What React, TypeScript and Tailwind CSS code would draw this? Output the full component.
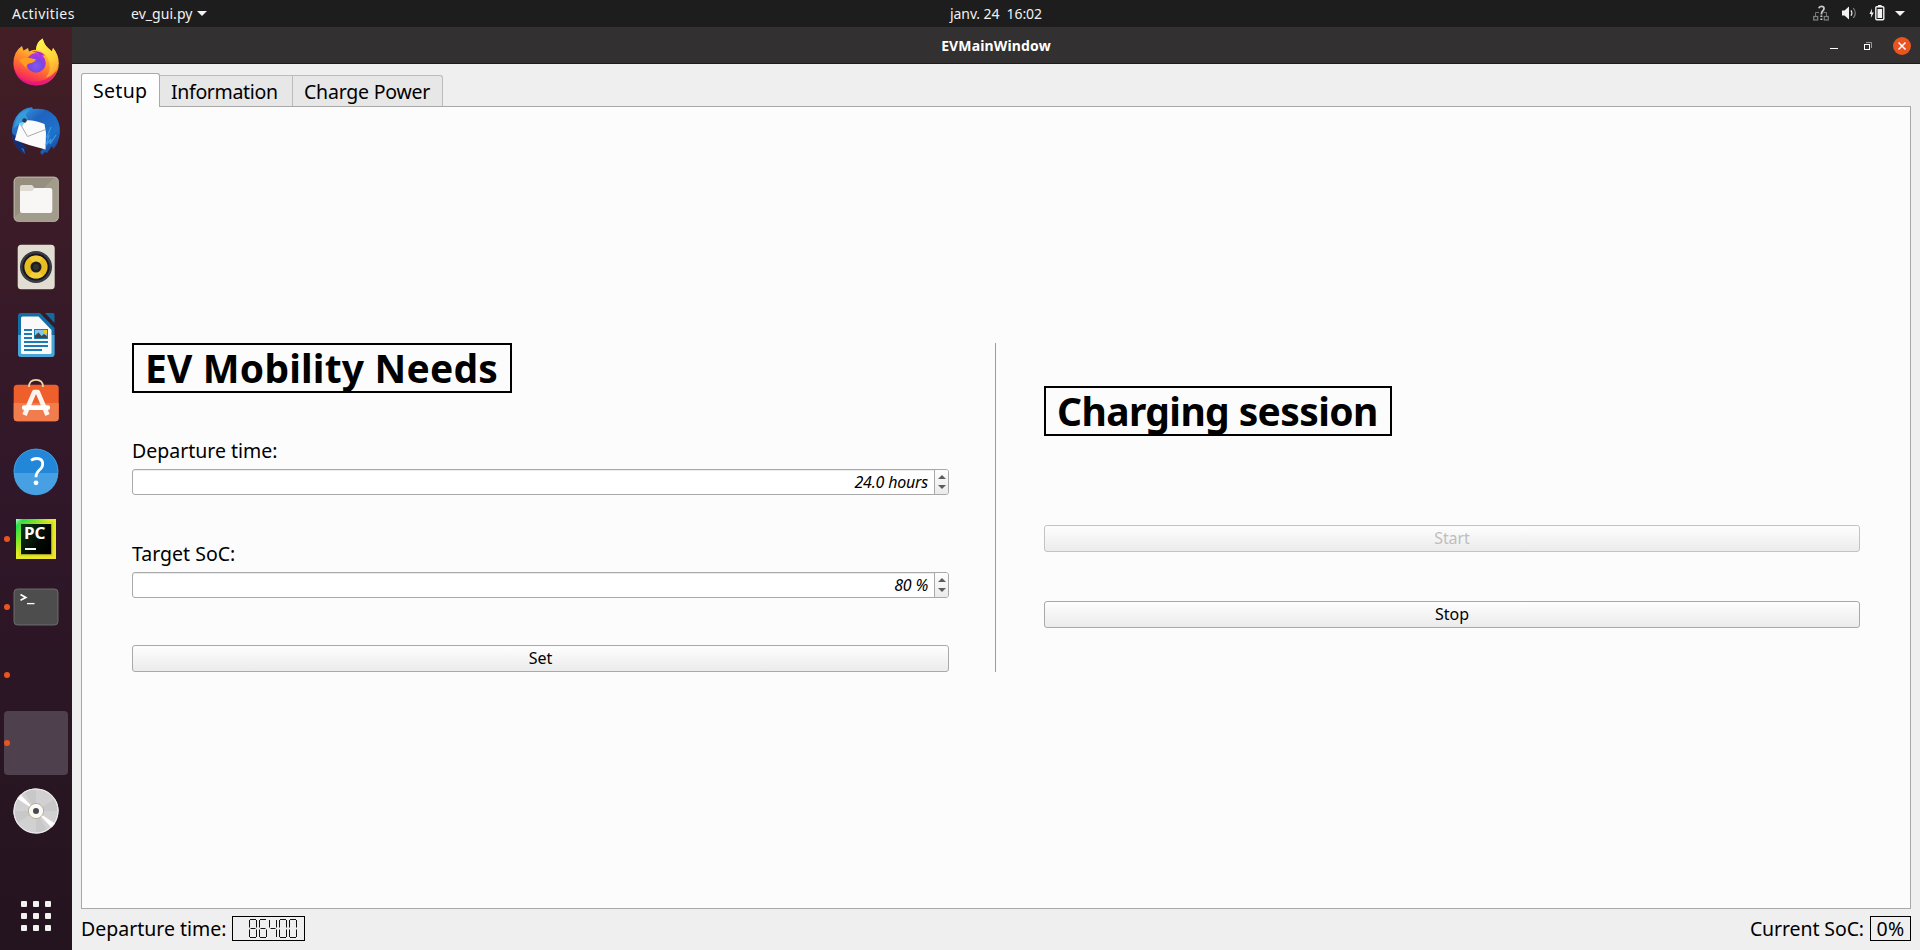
import React from "react";

function Firefox() {
  return (
    <svg viewBox="0 0 64 64" className="size-16">
      <defs>
        <linearGradient id="ffBody" x1="0.75" y1="0" x2="0.35" y2="1">
          <stop offset="0" stopColor="#fff04a" />
          <stop offset="0.35" stopColor="#ffb730" />
          <stop offset="0.6" stopColor="#ff7a2c" />
          <stop offset="0.85" stopColor="#fb3750" />
          <stop offset="1" stopColor="#e01587" />
        </linearGradient>
        <linearGradient id="ffTail" x1="0.3" y1="0" x2="0.7" y2="1">
          <stop offset="0" stopColor="#fff44f" />
          <stop offset="0.6" stopColor="#ffd038" />
          <stop offset="1" stopColor="#ff9a2e" />
        </linearGradient>
        <radialGradient id="ffGlobe" cx="0.5" cy="0.65" r="0.6">
          <stop offset="0" stopColor="#7a5cf5" />
          <stop offset="0.6" stopColor="#7e45dd" />
          <stop offset="1" stopColor="#b833e1" />
        </radialGradient>
      </defs>
      <g transform="translate(0 -0.6)">
        <path d="M18 15.5L19.5 20L24 17.5L25 21Q29 19 32 19.5Q32 12 38.7 8Q40 14 44 17.5L48 21L49 17.5Q54.8 24 54.8 33A22.6 22 0 0 1 9.4 33Q9.4 21 18 15.5Z" fill="url(#ffBody)" />
        <path d="M32 19.5Q32 12 38.7 8Q40 14 44 17.5L48 21L49 17.5Q54.5 24 54 33Q52 44 42 47Q49 38 44 28Q40 20 32 19.5Z" fill="url(#ffTail)" />
        <path d="M10 38Q14 50 28 51.5Q43 52 53 40Q48 54.8 32 54.8Q14 54 10 38Z" fill="#e31480" opacity="0.75" />
        <circle cx="32" cy="32.5" r="9.8" fill="url(#ffGlobe)" />
        <path d="M41 25Q36 20 28 21Q34 22 37 25Z" fill="#a32bd8" />
        <path d="M15 29.5Q20 26.5 26 27.5L32 29Q31 32 25 33Q22 34 22.5 38Q18 33 15 29.5Z" fill="#ff9c22" />
      </g>
    </svg>
  );
}

function Thunderbird() {
  return (
    <svg viewBox="0 0 64 64" className="size-16">
      <defs>
        <linearGradient id="tbBody" x1="0.1" y1="0" x2="0.9" y2="1">
          <stop offset="0" stopColor="#3ba2e4" />
          <stop offset="0.35" stopColor="#1f63bf" />
          <stop offset="0.7" stopColor="#1e73cc" />
          <stop offset="1" stopColor="#173f93" />
        </linearGradient>
      </defs>
      <path d="M12 18Q18 9 28 8.3L29 10Q44 8 52 18Q58 28 55 39Q53 47 49 50L48 47L43 54L41 53L38 56L36 53L40 49L41 34L20 24L11 38L12 44L20 50L21 55Q12 50 9 41Q6 28 12 18Z" fill="url(#tbBody)" />
      <path d="M8 34Q8 48 21 55L17 49L24 50Z" fill="#162d73" />
      <path d="M15.5 24L20 21.5Q29 20 40.5 25L42 34L41.5 50.5Q26 47 10.8 41Z" fill="#fbfbfb" />
      <path d="M16 24.5L23.5 37.5L41.5 30.5" fill="none" stroke="#aaa" strokeWidth="1" />
      <path d="M12 22Q14 13 27 10Q22 13 22 17Q26 20 21 22L18 27L15 25L10 29Z" fill="#379cdd" />
      <circle cx="20.5" cy="21.5" r="2.2" fill="#263a52" />
      <path d="M15 24L20 23L18 28Z" fill="#89d2ed" />
      <path d="M47 28L43 38L45 37L42 46L47 40L46 45L52 36" fill="none" stroke="#3b96df" strokeWidth="1.3" />
    </svg>
  );
}

function Files() {
  return (
    <svg viewBox="0 0 64 64" className="size-16">
      <rect x="9.7" y="9.7" width="45" height="45" rx="4.5" fill="#968f7f" />
      <path d="M11 50L50 11H51Q53.5 11 53.5 14V50Q53.5 53.3 50 53.3H14Q11 53.3 11 50Z" fill="#a29c8c" />
      <rect x="10.2" y="10.2" width="44" height="44" rx="4.2" fill="none" stroke="#bab5a7" strokeWidth="1" />
      <path d="M16 20Q16 18 18 18H28L31 21.5H46V28H16Z" fill="#dedbd2" />
      <path d="M16 24H28L31 21H46Q48.3 21 48.3 23V43.5Q48.3 46 46 46H18Q16 46 16 44Z" fill="#f8f7f5" />
    </svg>
  );
}

function Rhythmbox() {
  return (
    <svg viewBox="0 0 64 64" className="size-16">
      <rect x="13.7" y="9.7" width="37" height="44.6" rx="3.5" fill="#e2ddd2" />
      <circle cx="32" cy="32" r="16" fill="#3a3b44" />
      <circle cx="32" cy="32" r="13.5" fill="#16161c" />
      <circle cx="32" cy="32" r="11.6" fill="#e9bd20" />
      <path d="M32 32L25 22.8A11.6 11.6 0 0 1 39 22.8ZM32 32L25 41.2A11.6 11.6 0 0 0 39 41.2Z" fill="#f6d548" opacity="0.7" />
      <circle cx="32" cy="32" r="5.5" fill="#1f1f1f" />
      <circle cx="32" cy="32" r="3" fill="#333" />
    </svg>
  );
}

function Writer() {
  return (
    <svg viewBox="0 0 64 64" className="size-16">
      <path d="M14 13Q14 10 17 10H36L50.5 25V51Q50.5 54 47.5 54H17Q14 54 14 51Z" fill="#126ea5" />
      <path d="M14 32H50.5V51Q50.5 54 47.5 54H17Q14 54 14 51Z" fill="#4aa5d6" />
      <path d="M41 10H49Q50.5 10 50.5 12V20Z" fill="#126a9e" />
      <path d="M17 15Q17 13.5 18.5 13.5H34.5L47.5 27V49.5Q47.5 51 46 51H18.5Q17 51 17 49.5Z" fill="#fafafa" />
      <path d="M20 27h8M20 31h8M20 35h8M20 39h24M20 43h24M20 47h18" stroke="#1b7cb5" strokeWidth="2" />
      <rect x="30" y="26" width="14" height="10" fill="#1b7cb5" />
      <rect x="31" y="27" width="12" height="8" fill="#83c6ed" />
      <rect x="40" y="27" width="3" height="3" fill="#f2ca1c" />
      <path d="M31 35V32.5L34.5 29.5L37.5 33L40 31L43 33V35Z" fill="#444" />
    </svg>
  );
}

function Software() {
  return (
    <svg viewBox="0 0 64 64" className="size-16">
      <rect x="9.7" y="13.7" width="45" height="36.5" rx="3.5" fill="#ef5f2b" />
      <path d="M9.7 32H54.7V46.7Q54.7 50.2 51.2 50.2H13.2Q9.7 50.2 9.7 46.7Z" fill="#f17c4d" />
      <path d="M25 16Q25 8.8 32 8.8Q39 8.8 39 16" fill="none" stroke="#f1d5a5" strokeWidth="1.7" />
      <path d="M20.5 44L30.3 21H33.7L43.5 44" fill="none" stroke="#fdf4ef" strokeWidth="4.6" strokeLinejoin="round" />
      <rect x="18" y="34.3" width="28" height="4.6" rx="2" fill="#fff" />
    </svg>
  );
}

function Help() {
  return (
    <svg viewBox="0 0 64 64" className="size-16">
      <circle cx="32" cy="32" r="22.3" fill="#2287d9" />
      <path d="M9.7 34A22.3 22.3 0 0 0 54.3 34Z" fill="#46a0e3" />
      <circle cx="32" cy="32" r="21.9" fill="none" stroke="#4d9fdb" strokeWidth="0.8" />
      <path d="M27 21.3Q29.5 19.5 32.7 19.5Q38.7 19.5 38.7 25Q38.7 28.4 35.4 31Q32 33.7 32 38.3" fill="none" stroke="#fff" strokeWidth="2.8" />
      <circle cx="32" cy="43.8" r="2.4" fill="#fff" />
    </svg>
  );
}

function PyCharm() {
  return (
    <svg viewBox="0 0 64 64" className="size-16">
      <defs>
        <linearGradient id="pcEdge" x1="0" y1="0" x2="1" y2="1">
          <stop offset="0" stopColor="#bff7d0" />
          <stop offset="0.1" stopColor="#21df4e" />
          <stop offset="0.27" stopColor="#6fea30" />
          <stop offset="0.45" stopColor="#e3ec28" />
          <stop offset="1" stopColor="#f3e32a" />
        </linearGradient>
        <linearGradient id="pcInner" x1="0" y1="0.2" x2="1" y2="0.8">
          <stop offset="0" stopColor="#093414" />
          <stop offset="0.6" stopColor="#030a04" />
          <stop offset="1" stopColor="#000" />
        </linearGradient>
      </defs>
      <rect x="12" y="12" width="40" height="40" fill="url(#pcEdge)" />
      <rect x="15.5" y="15.5" width="33" height="33" fill="none" stroke="#b9c216" strokeWidth="1.5" opacity="0.4" />
      <rect x="17" y="17" width="30.3" height="30.3" fill="url(#pcInner)" />
      <text x="20" y="32" fontSize="15.5" fontWeight="700" fill="#fff" fontFamily="Noto Sans, sans-serif" textLength="21.5" lengthAdjust="spacingAndGlyphs">PC</text>
      <rect x="21" y="41" width="11" height="2" fill="#fff" />
    </svg>
  );
}

function Terminal() {
  return (
    <svg viewBox="0 0 64 64" className="size-16">
      <rect x="10" y="14" width="44" height="36" rx="3.5" fill="#4d4d4d" stroke="#727272" strokeWidth="0.9" />
      <path d="M16.5 19.5L21.8 22.4L16.5 25.3" fill="none" stroke="#fff" strokeWidth="1.7" />
      <path d="M23 28.6h7.5" stroke="#fff" strokeWidth="1.3" />
    </svg>
  );
}

function Disc() {
  return (
    <svg viewBox="0 0 64 64" className="size-16">
      <circle cx="32" cy="32" r="22.6" fill="#d1d1d1" />
      <path d="M32 32L20 12.8A22.6 22.6 0 0 1 32 9.4ZM32 32L54.6 32A22.6 22.6 0 0 0 51 19.8ZM32 32L32 54.6A22.6 22.6 0 0 0 43 51.8ZM32 32L9.4 32A22.6 22.6 0 0 0 13 44.2Z" fill="#c8c8c8" />
      <path d="M32 32L13 19.6A22.6 22.6 0 0 1 16.6 15.5ZM32 32L51 44.4A22.6 22.6 0 0 1 47.4 48.5Z" fill="#fff" />
      <circle cx="32" cy="32" r="22" fill="none" stroke="#efefef" strokeWidth="1" />
      <circle cx="32" cy="32" r="7.6" fill="#faf9f6" stroke="#b5a890" strokeWidth="0.9" />
      <circle cx="32" cy="32" r="3" fill="#4a4a4a" />
    </svg>
  );
}

const dock = [
  { icon: <Firefox />, running: false, active: false },
  { icon: <Thunderbird />, running: false, active: false },
  { icon: <Files />, running: false, active: false },
  { icon: <Rhythmbox />, running: false, active: false },
  { icon: <Writer />, running: false, active: false },
  { icon: <Software />, running: false, active: false },
  { icon: <Help />, running: false, active: false },
  { icon: <PyCharm />, running: true, active: false },
  { icon: <Terminal />, running: true, active: false },
  { icon: null, running: true, active: false },
  { icon: null, running: true, active: true },
  { icon: <Disc />, running: false, active: false },
];

function Dock() {
  return (
    <nav className="flex w-[72px] shrink-0 flex-col items-center bg-linear-to-b from-[#431e25] via-[#301729] to-[#24141f] pt-1">
      <div className="flex flex-col gap-1">
        {dock.map((item, i) => (
          <div key={i} className={item.active ? "relative size-16 rounded bg-[#4e404d]" : "relative size-16"}>
            {item.icon}
            {item.running && <span className="absolute top-[29px] left-0 size-1.5 rounded-full bg-[#e95420]" />}
          </div>
        ))}
      </div>
      <div className="mt-[58px] grid grid-cols-3 gap-1.5">
        {Array.from({ length: 9 }, (_, i) => (
          <span key={i} className="size-1.5 rounded-[1px] bg-[#f2f2f0]" />
        ))}
      </div>
    </nav>
  );
}

function Caret() {
  return (
    <svg viewBox="0 0 10 5" className="h-[5px] w-2.5">
      <path d="M0 0H10L5 5Z" fill="#f2f2f2" />
    </svg>
  );
}

function TopBar() {
  return (
    <header className="grid h-[27px] shrink-0 grid-cols-[1fr_auto_1fr] items-center bg-[#1d1d1d] text-sm/[27px] text-[#f2f2f2]">
      <div className="flex items-center pl-3">
        <span className="w-[119px] tracking-[0.45px]">Activities</span>
        <span className="mr-1 tracking-[0.05px]">ev_gui.py</span>
        <Caret />
      </div>
      <span className="pl-[72px] tracking-[-0.08px] whitespace-pre">janv. 24  16:02</span>
      <div className="flex items-center justify-end pr-[15px] pb-px">
        <svg viewBox="0 0 16 16" className="mr-[13px] size-4">
          <path d="M2.5 11V7.5H6M13.5 11V7.5H10.5" fill="none" stroke="#777" strokeWidth="1" />
          <rect x="0.7" y="11.5" width="4" height="3.5" fill="none" stroke="#808080" strokeWidth="1.2" />
          <rect x="11.3" y="11.5" width="4" height="3.5" fill="none" stroke="#808080" strokeWidth="1.2" />
          <path d="M5.8 3.2Q6.3 1.3 8.5 1.3Q11 1.3 11 3.6Q11 5 9.6 6Q8.5 7 8.4 9.5" fill="none" stroke="#c8c8c8" strokeWidth="1.8" />
          <path d="M7.4 10.5h2v1.5h-2zM7.4 13.4h2v1.5h-2z" fill="#c8c8c8" />
        </svg>
        <svg viewBox="0 0 15 14" className="mr-3 h-3.5 w-[15px]">
          <path d="M0 4.5H2.5L7 0.5V13.5L2.5 9.5H0Z" fill="#f2f2f2" />
          <path d="M9 4.2Q10.8 7 9 9.8" fill="none" stroke="#e0e0e0" strokeWidth="1.2" />
          <path d="M11.3 2Q15.3 7 11.3 12" fill="none" stroke="#808080" strokeWidth="1.2" />
        </svg>
        <svg viewBox="0 0 16 16" className="mr-2.5 size-4">
          <path d="M3 3.5L0.5 9H2.3L1.8 13L4.8 7.5H2.8Z" fill="#f2f2f2" />
          <rect x="6.8" y="1.8" width="8" height="13" rx="1" fill="none" stroke="#f2f2f2" strokeWidth="1.4" />
          <rect x="9" y="0" width="3.6" height="1.6" fill="#f2f2f2" />
          <rect x="8.5" y="4" width="4.6" height="9" fill="#f2f2f2" />
        </svg>
        <Caret />
      </div>
    </header>
  );
}

function TitleBar() {
  return (
    <div className="grid h-[37px] shrink-0 grid-cols-[1fr_auto_1fr] items-center border-b border-[#1c1b1b] bg-[#323030] text-sm/[36px] text-white">
      <span />
      <span className="pt-px font-bold tracking-[0.15px]">EVMainWindow</span>
      <div className="flex items-center justify-end pr-[9px]">
        <svg viewBox="0 0 8 8" className="mr-[26px] size-2">
          <rect y="6" width="8" height="1" fill="#fff" />
        </svg>
        <svg viewBox="0 0 8 8" className="mr-[21px] size-2">
          <path d="M2 0.5H7.5V6" fill="none" stroke="#999" />
          <rect x="0.5" y="2.5" width="5" height="5" fill="none" stroke="#fff" />
        </svg>
        <svg viewBox="0 0 18 18" className="size-[18px]">
          <circle cx="9" cy="9" r="9" fill="#e95420" />
          <path d="M5.5 5.5L12.5 12.5M12.5 5.5L5.5 12.5" stroke="#fff" strokeWidth="1.5" />
        </svg>
      </div>
    </div>
  );
}

function SpinBox({ value }: { value: string }) {
  return (
    <div className="flex h-[26px] overflow-hidden rounded-[3px] border border-[#a9a9a9] bg-white shadow-[inset_0_1px_0_#ececec]">
      <span className="flex-1 pr-1.5 text-right text-base/6 tracking-[-0.2px] italic">{value}</span>
      <div className="flex w-3.5 flex-col items-center justify-center gap-[6px] border-l border-[#a9a9a9] bg-linear-to-b from-[#fdfdfd] to-[#ebebeb]">
        <svg viewBox="0 0 8 4" className="h-1 w-2">
          <path d="M0 4L4 0L8 4Z" fill="#5c5c5c" />
        </svg>
        <svg viewBox="0 0 8 4" className="h-1 w-2">
          <path d="M0 0H8L4 4Z" fill="#5c5c5c" />
        </svg>
      </div>
    </div>
  );
}

function Button({ label, disabled }: { label: string; disabled?: boolean }) {
  return (
    <button
      disabled={disabled}
      className="flex h-[27px] w-full justify-center rounded-[3px] border border-[#a9a9a9] bg-linear-to-b from-[#fefefe] to-[#ebebeb] text-base/[25px] tracking-[-0.05px] disabled:border-[#c2c2c2] disabled:text-[#bebebe]"
    >
      {label}
    </button>
  );
}

const segmentPaths = {
  a: "M1 0.5H7",
  b: "M7.5 1V8.5",
  c: "M7.5 10.5V18",
  d: "M1 18.5H7",
  e: "M0.5 10.5V18",
  f: "M0.5 1V8.5",
  g: "M1.5 9.5H6.5",
};

const digitSegments: Record<string, (keyof typeof segmentPaths)[]> = {
  "0": ["a", "b", "c", "d", "e", "f"],
  "4": ["b", "c", "f", "g"],
  "6": ["a", "c", "d", "e", "f", "g"],
  "8": ["a", "b", "c", "d", "e", "f", "g"],
};

function Lcd({ value }: { value: string }) {
  return (
    <div className="flex h-[25px] w-[73px] items-center justify-end gap-0.5 border border-black pr-[7px]" aria-label={value}>
      {value.split("").map((d, i) => (
        <svg key={i} viewBox="0 0 8 19" className="h-[19px] w-2">
          {digitSegments[d].map((s) => (
            <path key={s} d={segmentPaths[s]} stroke="#111" strokeWidth="1" fill="none" />
          ))}
        </svg>
      ))}
    </div>
  );
}

export default function App() {
  return (
    <div className="flex h-[950px] w-[1920px] flex-col overflow-hidden bg-[#efefef] font-['Noto_Sans',sans-serif] text-black">
      <TopBar />
      <div className="flex min-h-0 flex-1">
        <Dock />
        <div className="flex min-w-0 flex-1 flex-col">
          <TitleBar />
          <main className="flex flex-1 flex-col px-[9px] pt-[9px] text-[19.5px]">
            <div className="relative z-10 -mb-px flex items-end">
              <div className="h-[34px] w-[79px] rounded-t-[3px] border border-b-0 border-[#a9a9a9] bg-linear-to-b from-white to-[#fcfcfc] pl-[11px] leading-[34px] tracking-[0.3px]">Setup</div>
              <div className="mb-px h-[31px] w-[133px] border-t border-r border-[#bcbcbc] bg-[#e7e7e7] pl-[11px] leading-[32px] tracking-[-0.33px]">Information</div>
              <div className="mb-px h-[31px] w-[150px] rounded-tr-[3px] border-t border-r border-[#bcbcbc] bg-[#e7e7e7] pl-[11px] leading-[32px] tracking-[-0.22px]">Charge Power</div>
            </div>
            <div className="flex h-[803px] items-start border border-[#a9a9a9] bg-[#fcfcfc] pt-[236px] pl-[50px]">
              <section className="flex w-[817px] flex-col">
                <h1 className="h-[50px] w-[380px] border-2 border-black pl-[11px] text-[39px]/[46px] font-bold tracking-[0.18px] whitespace-nowrap">EV Mobility Needs</h1>
                <label className="mt-[44px] mb-1 leading-7">Departure time:</label>
                <SpinBox value="24.0 hours" />
                <label className="mt-[45px] mb-1 leading-7">Target SoC:</label>
                <SpinBox value="80 %" />
                <div className="mt-[47px]">
                  <Button label="Set" />
                </div>
              </section>
              <div className="mr-[47px] ml-[46px] h-[329px] w-0.5 border-l border-[#9c9c9c]" />
              <section className="flex w-[816px] flex-col pt-[43px]">
                <h1 className="h-[50px] w-[348px] border-2 border-black pl-[11px] text-[39px]/[46px] font-bold tracking-[-0.62px] whitespace-nowrap">Charging session</h1>
                <div className="mt-[89px] flex flex-col gap-[49px]">
                  <Button label="Start" disabled />
                  <Button label="Stop" />
                </div>
              </section>
            </div>
            <footer className="mt-[7px] flex h-[25px] items-center leading-[25px]">
              <span className="w-[151px]">Departure time:</span>
              <Lcd value="86400" />
              <span className="mr-1.5 ml-auto tracking-[-0.1px]">Current SoC:</span>
              <span className="h-[25px] w-[41px] border border-black text-center leading-[23px] tracking-[0.4px]">0%</span>
            </footer>
          </main>
        </div>
      </div>
    </div>
  );
}
